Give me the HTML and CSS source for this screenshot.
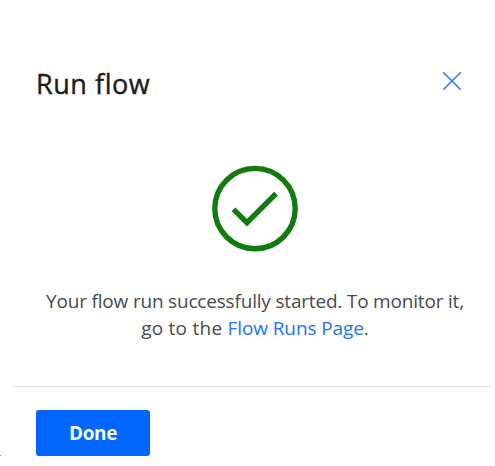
FILE: index.html
```html
<!DOCTYPE html>
<html lang="en">
<head>
<meta charset="utf-8">
<title>Run flow</title>
<link rel="stylesheet" href="styles.css">
</head>
<body>
<section class="panel">
  <header class="header">
    <h1 class="title">Run flow</h1>
    <button class="close" aria-label="Close">
      <svg width="20" height="20" viewBox="0 0 20 20"><path d="M1.2 1.2 18.8 18.8M18.8 1.2 1.2 18.8"/></svg>
    </button>
  </header>
  <main class="content">
    <svg class="status" width="88" height="88" viewBox="0 0 88 88"><circle cx="44" cy="43.6" r="40.2"/><path d="M22.5 44.3 36 57.6 65 28.6"/></svg>
    <p class="message"><span class="tight">Your flow run successfully started. To monitor it,</span><br><span class="loose">go to the </span><a class="link">Flow Runs Page</a>.</p>
  </main>
  <footer class="footer">
    <button class="done">Done</button>
  </footer>
</section>
<span class="speck"></span>
</body>
</html>
```
FILE: styles.css
```css
* { box-sizing: border-box; }
body {
  margin: 0;
  height: 466px;
  overflow: hidden;
  background: #fff;
  color: #4a4a4a;
  font-family: "Open Sans", "Noto Sans", sans-serif;
}
.panel {
  height: 466px;
  margin: 0 4px 0 13px;
  display: flex;
  flex-direction: column;
}
.header {
  display: flex;
  justify-content: space-between;
  align-items: flex-start;
  padding: 64px 29.5px 0 23px;
  height: 165px;
}
.title {
  margin: 0;
  font-size: 27px;
  line-height: 39px;
  font-weight: 500;
  letter-spacing: 0.55px;
  -webkit-text-stroke: 0.4px #1b1b1b;
  color: #1b1b1b;
  white-space: nowrap;
}
.close {
  display: block;
  margin: 7px 0 0;
  padding: 0;
  border: 0;
  background: none;
  line-height: 0;
}
.close path { fill: none; stroke: #3580fa; stroke-width: 1.6; }
.content {
  height: 221px;
  display: flex;
  flex-direction: column;
  align-items: center;
  padding-left: 6px;
}
.status { fill: none; stroke: #107c10; stroke-width: 5.4; }
.message {
  margin: 35px 0 0;
  font-size: 19px;
  line-height: 27px;
  text-align: center;
  white-space: nowrap;
}
.tight { letter-spacing: -0.19px; }
.loose { letter-spacing: 0.25px; }
.link { color: #2274fb; letter-spacing: -0.1px; }
.footer {
  border-top: 1px solid #e4e4e4;
  padding: 23px 23px 0;
}
.done {
  display: block;
  width: 114px;
  height: 45.5px;
  padding: 0;
  border: 0;
  border-radius: 3px;
  background: #0066ff;
  color: #f2f7ff;
  font: 700 19px/46px "Open Sans", "Noto Sans", sans-serif;
  letter-spacing: -0.4px;
}
.speck {
  position: absolute;
  left: 0;
  top: 455px;
  width: 1px;
  height: 1px;
  background: #888;
}
```
